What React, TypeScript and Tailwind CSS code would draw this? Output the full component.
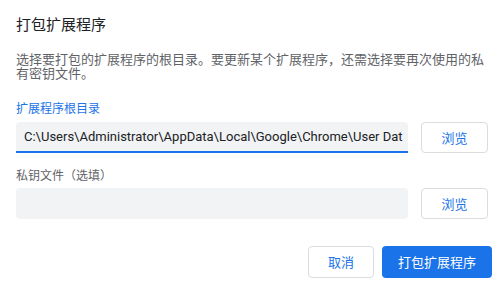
import React from "react";

const font = { fontFamily: '"Noto Sans CJK SC", Roboto, "Noto Sans", sans-serif' };

export default function App() {
  return (
    <div
      className="w-[504px] h-[292px] bg-white flex flex-col px-4 pt-[14px] text-[#5f6368]"
      style={font}
    >
      <div className="text-[15px] leading-[20px] text-[#202124]">打包扩展程序</div>
      <div className="mt-[18px] text-[13px] leading-[14px] pr-[4px]">
        选择要打包的扩展程序的根目录。要更新某个扩展程序，还需选择要再次使用的私有密钥文件。
      </div>
      <div className="mt-[20px] text-[12px] leading-[16px] text-[#1a73e8]">扩展程序根目录</div>
      <div className="mt-[6px] flex items-center gap-[13px]">
        <div
          className="w-[392px] h-[31px] bg-[#f1f3f4] rounded-t-[4px] border-b-2 border-[#1a73e8] flex items-center pl-[8px] overflow-hidden whitespace-nowrap text-[13px] text-[#202124]"
          style={{ fontFamily: 'Roboto, "Noto Sans", sans-serif' }}
        >
          C:\Users\Administrator\AppData\Local\Google\Chrome\User Dat
        </div>
        <button className="w-[67px] h-[31px] rounded-[4px] border border-[#dadce0] bg-white text-[13px] text-[#1a73e8] flex items-center justify-center">
          浏览
        </button>
      </div>
      <div className="mt-[14px] text-[12px] leading-[16px]">私钥文件（选填）</div>
      <div className="mt-[5px] flex items-center gap-[13px]">
        <div className="w-[392px] h-[31px] bg-[#f1f3f4] rounded-[4px]" />
        <button className="w-[67px] h-[31px] rounded-[4px] border border-[#dadce0] bg-white text-[13px] text-[#1a73e8] flex items-center justify-center">
          浏览
        </button>
      </div>
      <div className="mt-[27px] flex justify-end gap-[8px] -mr-[4px]">
        <button className="w-[66px] h-[32px] rounded-[4px] border border-[#dadce0] bg-white text-[13px] text-[#1a73e8] flex items-center justify-center">
          取消
        </button>
        <button className="w-[110px] h-[32px] rounded-[4px] bg-[#1a73e8] text-[13px] text-white flex items-center justify-center">
          打包扩展程序
        </button>
      </div>
    </div>
  );
}
